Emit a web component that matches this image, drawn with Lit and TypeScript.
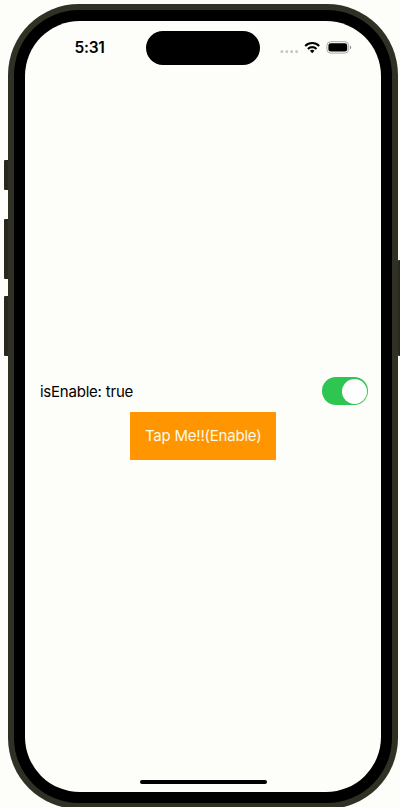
import { LitElement, html, css } from "lit";
import { customElement, state } from "lit/decorators.js";

@customElement("status-bar")
class StatusBar extends LitElement {
  static styles = css`
    :host {
      display: grid;
      grid-template-columns: 121px 114px 1fr;
      height: 34px;
      padding-top: 10px;
    }
    .time {
      padding: 8px 0 0 49px;
      font-size: 15.5px;
      line-height: 18px;
      font-weight: 600;
      letter-spacing: -0.2px;
    }
    .island {
      border-radius: 17px;
      background: #000;
    }
    .status {
      padding: 8px 0 0 20px;
    }
    svg {
      display: block;
    }
  `;
  render() {
    return html`
      <div class="time">5:31</div>
      <div class="island"></div>
      <div class="status">
        <svg width="74" height="18" viewBox="280 39 74 18">
          <g fill="#c4c4bc">
            <rect x="280.5" y="50.2" width="2.8" height="2.8" rx="1.2" />
            <rect x="285.4" y="50.2" width="2.8" height="2.8" rx="1.2" />
            <rect x="290.3" y="50.2" width="2.8" height="2.8" rx="1.2" />
            <rect x="295.2" y="50.2" width="2.8" height="2.8" rx="1.2" />
          </g>
          <g fill="none" stroke="#000" stroke-width="2.1">
            <path d="M305.2 45.9a10 10 0 0 1 14 0" />
            <path d="M307.9 48.9a6.2 6.2 0 0 1 8.6 0" />
          </g>
          <path d="M309.9 50.8a3.4 3.4 0 0 1 4.6 0l-2.3 2.4z" />
          <rect x="326.9" y="41.7" width="21.8" height="11.4" rx="3.8" fill="none" stroke="#a9a9a9" />
          <rect x="328.4" y="43.2" width="18.8" height="8.4" rx="2.3" />
          <path d="M350 45.5q1.2.6 1.2 1.9t-1.2 1.9z" fill="#909090" />
        </svg>
      </div>
    `;
  }
}

@customElement("toggle-switch")
class ToggleSwitch extends LitElement {
  static styles = css`
    :host {
      display: flex;
      justify-content: flex-end;
      box-sizing: border-box;
      width: 46px;
      height: 28px;
      padding: 1.5px;
      border-radius: 14px;
      background: #2fc551;
    }
    .knob {
      width: 25px;
      height: 25px;
      border-radius: 50%;
      background: #fefefe;
    }
  `;
  render() {
    return html`<div class="knob"></div>`;
  }
}

@customElement("app-root")
export class AppRoot extends LitElement {
  static styles = css`
    :host {
      display: block;
      position: relative;
      box-sizing: border-box;
      width: 400px;
      height: 807px;
      padding: 4px 0 0 8px;
      overflow: hidden;
      background: #fdfdf9;
      color: #000;
      font-family: Inter, "Liberation Sans", sans-serif;
    }
    .device {
      box-sizing: border-box;
      width: 390px;
      height: 805px;
      padding: 6px;
      border-radius: 71px;
      background: #303024;
    }
    .bezel {
      box-sizing: border-box;
      height: 793px;
      padding: 11px 11px 11px 11.4px;
      border-radius: 65px;
      background: #000;
    }
    .screen {
      display: flex;
      flex-direction: column;
      height: 771px;
      border-radius: 55px;
      background: #fdfdf9;
    }
    .content {
      flex: 1;
      display: flex;
      flex-direction: column;
      justify-content: center;
      align-items: center;
      gap: 7px;
      padding-bottom: 8px;
    }
    .row {
      align-self: stretch;
      display: flex;
      justify-content: space-between;
      align-items: center;
      padding: 0 13px 0 14.5px;
    }
    .label,
    .action {
      font-size: 15px;
      letter-spacing: -0.21px;
      white-space: nowrap;
    }
    .action {
      box-sizing: border-box;
      width: 146px;
      height: 48px;
      line-height: 48px;
      text-align: center;
      color: #fdfae8;
      background: #ff9500;
    }
    .home {
      align-self: center;
      width: 127px;
      height: 4px;
      margin-bottom: 8px;
      border-radius: 2px;
      background: #000;
    }
    .key {
      position: absolute;
      left: 4px;
      width: 4px;
      border-radius: 1px 0 0 1px;
      background: #28281e;
    }
    .silent {
      top: 160px;
      height: 30px;
    }
    .up {
      top: 219px;
      height: 60px;
    }
    .down {
      top: 296px;
      height: 60px;
    }
    .power {
      left: 398px;
      top: 260px;
      height: 96px;
    }
  `;

  @state() enabled = true;

  render() {
    return html`
      <div class="key silent"></div>
      <div class="key up"></div>
      <div class="key down"></div>
      <div class="key power"></div>
      <div class="device">
        <div class="bezel">
          <div class="screen">
            <status-bar></status-bar>
            <div class="content">
              <div class="row">
                <span class="label">isEnable: ${this.enabled}</span>
                <toggle-switch></toggle-switch>
              </div>
              <div class="action">Tap Me!!(Enable)</div>
            </div>
            <div class="home"></div>
          </div>
        </div>
      </div>
    `;
  }
}
